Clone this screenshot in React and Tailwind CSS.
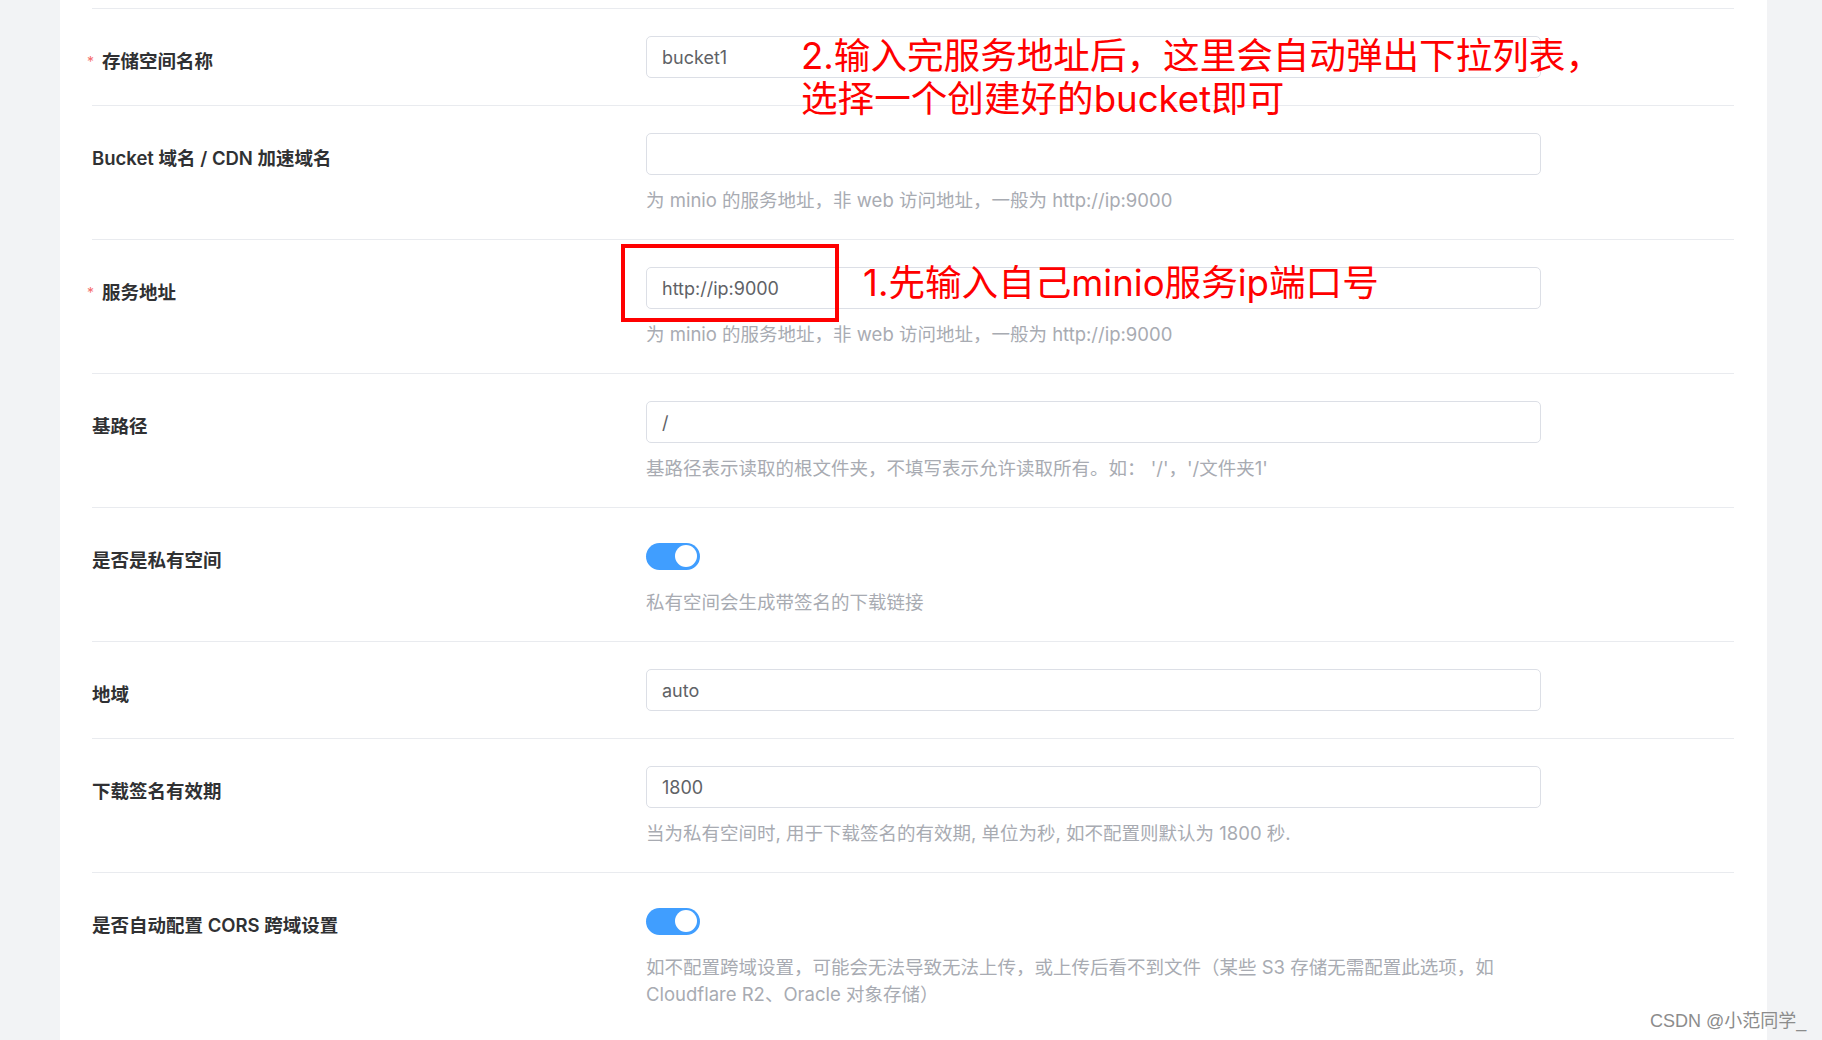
import React from "react";

const FONT = { fontFamily: '"Inter", "Noto Sans CJK SC", sans-serif' };

function Toggle() {
  return (
    <div className="flex h-[42px] items-center">
      <div className="flex h-[27px] w-[54px] items-center justify-end rounded-full bg-[#409eff] pr-[3px]">
        <div className="h-[22px] w-[22px] rounded-full bg-white" />
      </div>
    </div>
  );
}

function TextInput({ value }) {
  return (
    <div className="flex h-[42px] w-full items-center rounded-[5px] border border-[#dcdfe6] bg-white px-[15px] text-[18px] text-[#606266]">
      {value}
    </div>
  );
}

function FormRow({ label, required, hint, last, children }) {
  return (
    <div
      className={`flex pt-[27px] ${last ? "pb-[60px]" : "border-b border-[#e9ebef]"} ${
        hint ? "pb-[25px]" : "pb-[27px]"
      }`}
    >
      <div className="flex h-[42px] w-[554px] shrink-0 items-center pt-[9px] text-[18.5px] font-semibold text-[#303133]">
        {required && (
          <span className="-ml-[5px] mr-[9px] inline-block w-[6px] text-center text-[14px] font-normal text-[#f56c6c]">
            *
          </span>
        )}
        {label}
      </div>
      <div className="w-[895px]">
        {children}
        {hint && (
          <div className="mt-[12px] text-[18.5px] leading-[27px] text-[#a8abb2]">
            {hint}
          </div>
        )}
      </div>
    </div>
  );
}

export default function App() {
  const minioHint = "为 minio 的服务地址，非 web 访问地址，一般为 http://ip:9000";

  return (
    <div className="relative flex min-h-[1040px] bg-[#f2f3f5]" style={FONT}>
      <div className="ml-[60px] w-[1707px] overflow-hidden bg-white pl-[32px] pr-[33px]">
        <div className="h-[9px] border-b border-[#e9ebef]" />

        <FormRow label="存储空间名称" required>
          <TextInput value="bucket1" />
        </FormRow>

        <FormRow label="Bucket 域名 / CDN 加速域名" hint={minioHint}>
          <TextInput value="" />
        </FormRow>

        <FormRow label="服务地址" required hint={minioHint}>
          <TextInput value="http://ip:9000" />
        </FormRow>

        <FormRow
          label="基路径"
          hint="基路径表示读取的根文件夹，不填写表示允许读取所有。如： '/'，'/文件夹1'"
        >
          <TextInput value="/" />
        </FormRow>

        <FormRow label="是否是私有空间" hint="私有空间会生成带签名的下载链接">
          <Toggle />
        </FormRow>

        <FormRow label="地域">
          <TextInput value="auto" />
        </FormRow>

        <FormRow
          label="下载签名有效期"
          hint="当为私有空间时, 用于下载签名的有效期, 单位为秒, 如不配置则默认为 1800 秒."
        >
          <TextInput value="1800" />
        </FormRow>

        <FormRow
          label="是否自动配置 CORS 跨域设置"
          last
          hint={
            <>
              如不配置跨域设置，可能会无法导致无法上传，或上传后看不到文件（某些 S3 存储无需配置此选项，如
              <br />
              Cloudflare R2、Oracle 对象存储）
            </>
          }
        >
          <Toggle />
        </FormRow>
      </div>

      {/* annotations drawn over the screenshot */}
      <div className="absolute left-[801px] top-[35px] text-[36.6px] leading-[43px] text-[#ff0000]">
        2.输入完服务地址后，这里会自动弹出下拉列表，
        <br />
        选择一个创建好的bucket即可
      </div>
      <div className="absolute left-[621px] top-[244px] h-[78px] w-[218px] border-4 border-[#ff0000]" />
      <div className="absolute left-[863px] top-[262px] text-[36.6px] leading-[43px] text-[#ff0000]">
        1.先输入自己minio服务ip端口号
      </div>

      <div
        className="absolute left-[1650px] top-[1009px] text-[18px] leading-[24px] text-[#8c8c8c]"
        style={{ fontFamily: '"Liberation Sans", "Noto Sans CJK SC", sans-serif' }}
      >
        CSDN @小范同学_
      </div>
    </div>
  );
}
